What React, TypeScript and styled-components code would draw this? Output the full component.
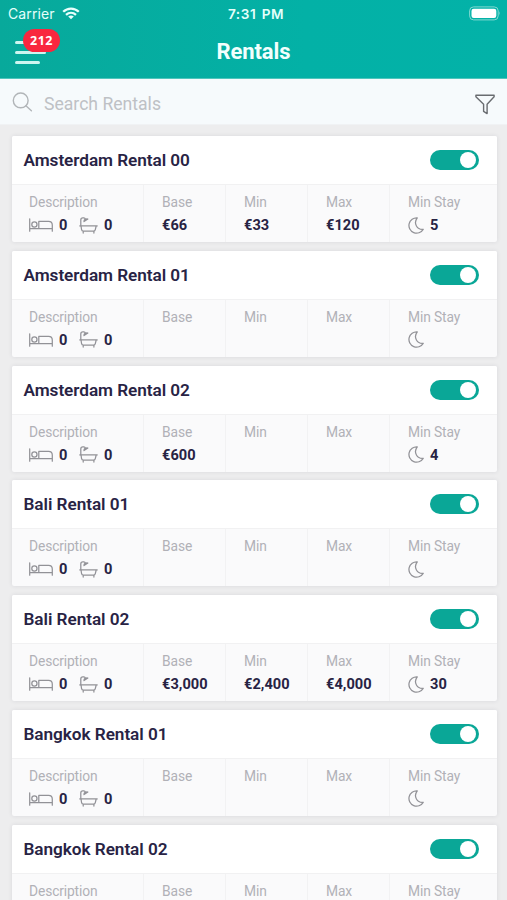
import React from "react";
import styled, { createGlobalStyle } from "styled-components";

const GlobalStyle = createGlobalStyle`
  *, *::before, *::after { box-sizing: border-box; }
  html, body { margin: 0; height: 100%; overflow: hidden; background: #ededee; }
  body { font-family: Roboto, "Liberation Sans", sans-serif; color: #282344; }
`;

const Screen = styled.main`
  height: 900px;
  overflow: hidden;
  display: flex;
  flex-direction: column;
  background: #ededee;
`;

const TopBar = styled.header`
  flex: none;
  height: 79px;
  background: linear-gradient(90deg, #08a99b 0%, #03b1a6 60%, #03b2a8 100%);
  border-bottom: 1px solid #4fc5bc;
  color: #fff;
`;

const StatusBar = styled.div`
  height: 27px;
  padding: 0 6px 0 8px;
  display: grid;
  grid-template-columns: 1fr auto 1fr;
  align-items: center;
  font-family: Inter, sans-serif;
  font-size: 14px;
  color: #e4fffb;
`;

const Carrier = styled.div`
  display: flex;
  align-items: center;
  gap: 7px;
  letter-spacing: 0.12px;
`;

const Clock = styled.div`
  padding-left: 3px;
  font-size: 13.6px;
  font-weight: 600;
  letter-spacing: 0.55px;
  word-spacing: 1.5px;
`;

const BatteryIcon = styled.svg`
  justify-self: end;
  display: block;
`;

const NavBar = styled.div`
  height: 50px;
  padding: 0 14px;
  display: grid;
  grid-template-columns: 1fr auto 1fr;
`;

const MenuButton = styled.button`
  position: relative;
  width: 48px;
  height: 40px;
  padding: 14px 0 0 1px;
  border: 0;
  background: none;
  display: flex;
  flex-direction: column;
  gap: 7px;
`;

const MenuLine = styled.span<{ $width: number }>`
  flex: none;
  width: ${(p) => p.$width}px;
  height: 3px;
  border-radius: 2px;
  background: #cdf6f0;
`;

const Badge = styled.span`
  position: absolute;
  left: 9px;
  top: 2px;
  width: 37px;
  height: 23px;
  border-radius: 12px;
  background: #f9273f;
  color: #fff;
  font: 700 12.5px/23px "Open Sans", sans-serif;
  letter-spacing: 0.5px;
  text-align: center;
`;

const Title = styled.h1`
  margin: 0;
  padding-top: 9px;
  font-size: 22px;
  line-height: 32px;
  font-weight: 700;
  letter-spacing: -0.1px;
  color: #f2fffd;
`;

const SearchBar = styled.div`
  flex: none;
  height: 46px;
  padding: 2px 11px 0 12px;
  display: flex;
  align-items: center;
  background: #f6fafc;
  border-bottom: 1px solid #f0f2f4;
`;

const SearchInput = styled.input`
  flex: 1;
  min-width: 0;
  margin-left: 11px;
  padding: 2px 0 0;
  border: 0;
  outline: 0;
  background: none;
  font: 400 17.6px/24px Roboto, sans-serif;
  letter-spacing: 0;
  &::placeholder { color: #bec1c5; opacity: 1; }
`;

const FilterGlyph = styled.svg`
  flex: none;
  margin-top: 4px;
`;

const List = styled.section`
  padding: 11px 10.5px 0 11.5px;
  display: flex;
  flex-direction: column;
  gap: 8.8px;
`;

const Card = styled.article`
  flex: none;
  height: 106px;
  border-radius: 2px;
  overflow: hidden;
  background: #fafafb;
  box-shadow: 0 0 4px rgba(40, 40, 60, 0.1);
`;

const CardHeader = styled.div`
  height: 49px;
  padding: 0 18px 0 12px;
  display: flex;
  align-items: center;
  justify-content: space-between;
  background: #fff;
  border-bottom: 1px solid #f1f1f2;
`;

const CardTitle = styled.h2`
  margin: 0;
  font-size: 17.2px;
  line-height: 24px;
  font-weight: 600;
  letter-spacing: -0.05px;
`;

const Toggle = styled.span`
  width: 49px;
  height: 20px;
  padding: 2px 2.5px;
  border-radius: 10px;
  display: flex;
  justify-content: flex-end;
  background: #0aa797;
`;

const Knob = styled.span`
  width: 16px;
  height: 16px;
  border-radius: 50%;
  background: #fff;
`;

const Fields = styled.div`
  height: 57px;
  display: grid;
  grid-template-columns: 132px 82px 82px 82px 1fr;
`;

const Field = styled.div`
  padding: 8px 0 0 18.6px;
  border-right: 1px solid #f2f2f3;
  &:first-child { padding-left: 17.6px; }
  &:last-child { border-right: 0; }
`;

const Label = styled.div`
  font-size: 13.8px;
  line-height: 18px;
  letter-spacing: -0.14px;
  color: #b1b1b7;
  white-space: nowrap;
`;

const Value = styled.div`
  height: 20px;
  margin-top: 4px;
  display: flex;
  align-items: center;
  font-size: 14.6px;
  line-height: 20px;
  font-weight: 700;
`;

const Count = styled.span<{ $before: number; $after?: number }>`
  margin-left: ${(p) => p.$before}px;
  margin-right: ${(p) => p.$after ?? 0}px;
`;

const LineIcon = styled.svg`
  flex: none;
  display: block;
  fill: none;
  stroke: #929297;
  stroke-width: 1.25;
  stroke-linecap: round;
  stroke-linejoin: round;
`;

const WifiIcon = () => (
  <svg width="18" height="13" viewBox="0 0 18 13" fill="none" stroke="#e9fffc" strokeWidth="2.3">
    <path d="M1.2 4.8C5.6.5 12.4.5 16.8 4.8M4 7.8C7 5.1 11 5.1 14 7.8" />
    <path d="M9 12.3 6.2 9.5Q9 7.4 11.8 9.5Z" fill="#e9fffc" stroke="none" />
  </svg>
);

const Battery = () => (
  <BatteryIcon width="32" height="15" viewBox="0 0 32 15">
    <rect x=".6" y=".9" width="28.6" height="13" rx="4" fill="none" stroke="#83d8d1" />
    <rect x="2.5" y="2.8" width="24.8" height="9.2" rx="2.2" fill="#fff" />
    <path d="M30.4 5.3Q32 7.4 30.4 9.5Z" fill="#83d8d1" />
  </BatteryIcon>
);

const SearchIcon = () => (
  <svg width="21" height="21" viewBox="0 0 21 21" fill="none" stroke="#b1b5b8" strokeWidth="1.4" strokeLinecap="round">
    <circle cx="8.7" cy="8.4" r="7.4" />
    <path d="m13.9 13.8 5.5 5" />
  </svg>
);

const FilterIcon = () => (
  <FilterGlyph width="21" height="21" viewBox="0 0 21 21" fill="none" stroke="#696c70" strokeWidth="1.4" strokeLinejoin="round">
    <path d="M.9 1.2H19.1V2.8L12.1 10.2V19.6L8.6 17.4V10.2L.9 2.8Z" />
  </FilterGlyph>
);

const BedIcon = () => (
  <LineIcon width="24" height="14" viewBox="0 0 24 14">
    <path d="M.7.8V13.2M.7 10.6H23.3V13.2M23.3 10.6V7.2Q23.3 3.4 19.5 3.4H9.8V10.6" />
    <circle cx="5.4" cy="6.5" r="2.6" />
  </LineIcon>
);

const BathIcon = () => (
  <LineIcon width="19" height="17" viewBox="0 0 19 17">
    <path d="M1.8 8.7V3Q1.8.9 3.8.9H4.8Q6 .9 6.4 2.2" />
    <path d="M5 4.6Q4.8 1.7 8.9 2Z" fill="#b0b0b4" />
    <path d="M.8 8.9H18.2M2 9 2.6 12.6Q2.8 14.1 4.4 14.1H14.4Q16 14.1 16.3 12.6L17.2 9M4.2 14.3V16M14.9 14.3V16" />
  </LineIcon>
);

const MoonIcon = () => (
  <LineIcon width="16" height="17" viewBox="0 0 16 17">
    <path d="M9.3.9A7.65 7.65 0 1 0 15.2 12.4C9.4 13 4.9 6.5 9.3.9Z" />
  </LineIcon>
);

type Rental = { name: string; base?: string; min?: string; max?: string; stay?: string };

const rentals: Rental[] = [
  { name: "Amsterdam Rental 00", base: "€66", min: "€33", max: "€120", stay: "5" },
  { name: "Amsterdam Rental 01" },
  { name: "Amsterdam Rental 02", base: "€600", stay: "4" },
  { name: "Bali Rental 01" },
  { name: "Bali Rental 02", base: "€3,000", min: "€2,400", max: "€4,000", stay: "30" },
  { name: "Bangkok Rental 01" },
  { name: "Bangkok Rental 02" },
];

const RentalCard = ({ rental }: { rental: Rental }) => (
  <Card>
    <CardHeader>
      <CardTitle>{rental.name}</CardTitle>
      <Toggle role="switch" aria-checked="true">
        <Knob />
      </Toggle>
    </CardHeader>
    <Fields>
      <Field>
        <Label>Description</Label>
        <Value>
          <BedIcon />
          <Count $before={6} $after={12}>0</Count>
          <BathIcon />
          <Count $before={5.5}>0</Count>
        </Value>
      </Field>
      <Field>
        <Label>Base</Label>
        <Value>{rental.base}</Value>
      </Field>
      <Field>
        <Label>Min</Label>
        <Value>{rental.min}</Value>
      </Field>
      <Field>
        <Label>Max</Label>
        <Value>{rental.max}</Value>
      </Field>
      <Field>
        <Label>Min Stay</Label>
        <Value>
          <MoonIcon />
          <Count $before={6}>{rental.stay}</Count>
        </Value>
      </Field>
    </Fields>
  </Card>
);

export default function App() {
  return (
    <>
      <GlobalStyle />
      <Screen>
        <TopBar>
          <StatusBar>
            <Carrier>
              Carrier
              <WifiIcon />
            </Carrier>
            <Clock>7:31 PM</Clock>
            <Battery />
          </StatusBar>
          <NavBar>
            <MenuButton aria-label="Menu">
              <MenuLine $width={29} />
              <MenuLine $width={31} />
              <MenuLine $width={25} />
              <Badge>212</Badge>
            </MenuButton>
            <Title>Rentals</Title>
          </NavBar>
        </TopBar>
        <SearchBar>
          <SearchIcon />
          <SearchInput placeholder="Search Rentals" />
          <FilterIcon />
        </SearchBar>
        <List>
          {rentals.map((rental) => (
            <RentalCard key={rental.name} rental={rental} />
          ))}
        </List>
      </Screen>
    </>
  );
}
